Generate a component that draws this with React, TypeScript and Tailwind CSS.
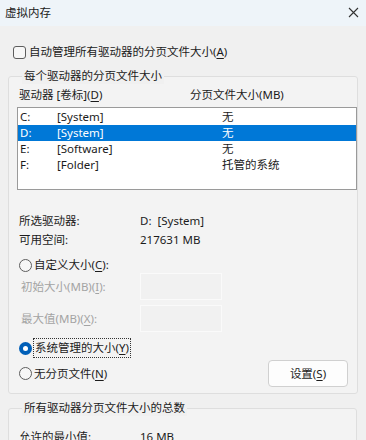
const font = { fontFamily: '"Noto Sans", "Noto Sans CJK SC", sans-serif' };

const U = ({ c }: { c: string }) => <span className="underline underline-offset-2">{c}</span>;

const Radio = ({ checked }: { checked?: boolean }) =>
  checked ? (
    <span className="flex h-[13px] w-[13px] shrink-0 items-center justify-center rounded-full bg-[#005fb8]">
      <span className="h-[5px] w-[5px] rounded-full bg-white" />
    </span>
  ) : (
    <span className="h-[13px] w-[13px] shrink-0 rounded-full border border-[#5d5d5d] bg-[#f7f7f7]" />
  );

const drives = [
  { d: 'C:', label: '[System]', size: '无' },
  { d: 'D:', label: '[System]', size: '无', sel: true },
  { d: 'E:', label: '[Software]', size: '无' },
  { d: 'F:', label: '[Folder]', size: '托管的系统' },
];

export default function App() {
  return (
    <div className="h-[440px] w-[366px] overflow-hidden bg-[#f0f0f0] text-[11.5px] leading-[16px] text-[#1b1b1b]" style={font}>
      {/* title bar */}
      <div className="flex h-[26px] items-center justify-between bg-[#eef4f9] pb-[1px] pl-[5px] pr-[7px]">
        <span className="text-[11.5px]">虚拟内存</span>
        <svg width="11" height="11" viewBox="0 0 11 11" stroke="#333" strokeWidth="1.1">
          <path d="M1 1 L10 10 M10 1 L1 10" />
        </svg>
      </div>

      <div className="pl-[8px] pr-[9px]">
        <div className="mt-[19px] flex h-[14px] items-center gap-[3px] pl-[5px]">
          <span className="h-[13px] w-[13px] rounded-[3px] border border-[#5d5d5d] bg-[#f7f7f7]" />
          <span>
            自动管理所有驱动器的分页文件大小(<U c="A" />)
          </span>
        </div>

        <fieldset className="mt-[9px] rounded-[3px] border border-[#dedede] bg-[#f3f3f3] pb-[6px] pl-[8px]">
          <legend className="ml-[5px] bg-[#f0f0f0] px-[2px] leading-[16px]">每个驱动器的分页文件大小</legend>

          <div className="mt-[3px] flex h-[16px] items-center pl-[2px]">
            <span className="w-[171px]">
              驱动器 [卷标](<U c="D" />)
            </span>
            <span>分页文件大小(MB)</span>
          </div>

          <div className="mt-[4px] h-[83px] w-[340px] border border-[#9a9a9a] bg-white pt-[1px]">
            {drives.map((r) => (
              <div
                key={r.d}
                className={`flex h-[16px] items-center pl-[2px] ${r.sel ? 'bg-[#0078d7] text-white' : ''}`}
              >
                <span className="w-[37px]">{r.d}</span>
                <span className="w-[165px]">{r.label}</span>
                <span>{r.size}</span>
              </div>
            ))}
          </div>

          <div className="mt-[21px] pl-[2px]">
            <div className="flex h-[19px] items-center">
              <span className="w-[121px]">所选驱动器:</span>
              <span>D:&nbsp;&nbsp;[System]</span>
            </div>
            <div className="flex h-[19px] items-center">
              <span className="w-[121px]">可用空间:</span>
              <span>217631 MB</span>
            </div>
          </div>

          <div className="mt-[8px] flex h-[16px] items-center gap-[2px] pl-[2px]">
            <Radio />
            <span>
              自定义大小(<U c="C" />):
            </span>
          </div>

          <div className="flex h-[27px] items-center pl-[4px] text-[#a3a3a3]">
            <span className="w-[119px]">
              初始大小(MB)(<U c="I" />):
            </span>
            <span className="h-[27px] w-[82px] border border-[#fafafa] bg-[#f1f1f1]" />
          </div>
          <div className="mt-[5px] flex h-[27px] items-center pl-[4px] text-[#a3a3a3]">
            <span className="w-[119px]">
              最大值(MB)(<U c="X" />):
            </span>
            <span className="h-[27px] w-[82px] border border-[#fafafa] bg-[#f1f1f1]" />
          </div>

          <div className="mt-[6px] flex h-[20px] items-center gap-[1px] pl-[2px]">
            <Radio checked />
            <span className="border border-dotted border-[#333] px-[1px] leading-[18px]">
              系统管理的大小(<U c="Y" />)
            </span>
          </div>

          <div className="mt-[2px] flex h-[27px] items-center gap-[2px] pl-[2px] pr-[9px]">
            <Radio />
            <span>
              无分页文件(<U c="N" />)
            </span>
            <button className="ml-auto h-[27px] w-[80px] rounded-[4px] border border-[#d0d0d0] bg-[#fdfdfd] text-[11.5px]">
              设置(<U c="S" />)
            </button>
          </div>
        </fieldset>

        <fieldset className="mt-[6px] rounded-[3px] border border-[#dedede] bg-[#f3f3f3] pb-[6px] pl-[8px]">
          <legend className="ml-[5px] bg-[#f0f0f0] px-[2px] leading-[16px]">所有驱动器分页文件大小的总数</legend>
          <div className="mt-[11px] flex h-[19px] items-center pl-[2px]">
            <span className="w-[121px]">允许的最小值:</span>
            <span>16 MB</span>
          </div>
        </fieldset>
      </div>
    </div>
  );
}
